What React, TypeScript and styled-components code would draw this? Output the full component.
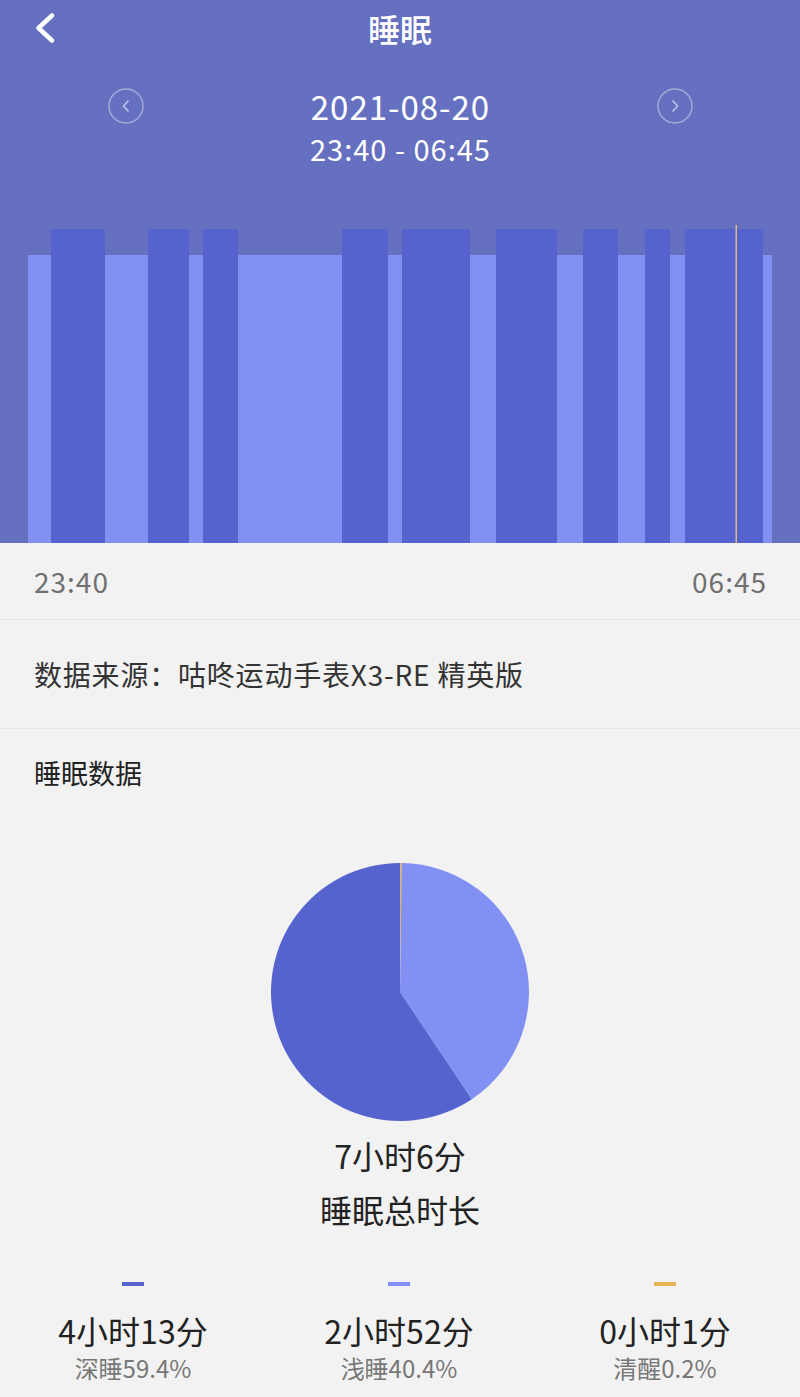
import * as React from "react";
import styled, { createGlobalStyle } from "styled-components";

const GlobalStyle = createGlobalStyle`
  html, body {
    margin: 0;
    padding: 0;
    background: #f2f2f2;
    font-family: "Noto Sans CJK SC", "Noto Sans", sans-serif;
  }
`;

const DEEP = "#5663cf";
const LIGHT = "#8290f4";
const AWAKE = "#e6b553";

const Page = styled.div`
  width: 800px;
  height: 1397px;
  overflow: hidden;
  background: #f2f2f2;
`;

const Header = styled.header`
  background: #6670c0;
  display: flex;
  flex-direction: column;
  color: #fff;
`;

const TopBar = styled.div`
  position: relative;
  height: 56px;
  display: flex;
  align-items: center;
  justify-content: center;
`;

const BackButton = styled.div`
  position: absolute;
  left: 32px;
  top: 12px;
  width: 26px;
  height: 32px;
`;

const Title = styled.h1`
  margin: 0;
  font-size: 32px;
  font-weight: 500;
  line-height: 56px;
`;

const DateRow = styled.div`
  margin-top: 29px;
  display: flex;
  align-items: flex-start;
  justify-content: space-between;
  padding: 0 107px 0 108px;
`;

const NavCircle = styled.div`
  width: 36px;
  height: 36px;
  margin-top: 3px;
`;

const DateText = styled.div`
  display: flex;
  flex-direction: column;
  align-items: center;
`;

const DateLine = styled.div<{ $size: number }>`
  font-size: ${(p) => p.$size}px;
  line-height: 42px;
  letter-spacing: 1px;
`;

const ChartWrap = styled.div`
  margin-top: 54px;
  height: 320px;
  display: flex;
`;

const TimeAxis = styled.div`
  height: 76px;
  display: flex;
  align-items: center;
  justify-content: space-between;
  padding: 0 33px 0 34px;
  font-size: 28px;
  letter-spacing: 1px;
  color: #707070;
  border-bottom: 1px solid #e6e6e6;
`;

const SourceRow = styled.div`
  height: 108px;
  display: flex;
  align-items: center;
  padding: 0 34px;
  font-size: 28px;
  letter-spacing: 0.8px;
  color: #333;
  border-bottom: 1px solid #e6e6e6;
`;

const SectionTitle = styled.div`
  padding: 24px 34px 0;
  font-size: 27px;
  line-height: 40px;
  color: #222;
`;

const PieBox = styled.div`
  margin-top: 70px;
  display: flex;
  justify-content: center;
`;

const Summary = styled.div`
  margin-top: 7px;
  display: flex;
  flex-direction: column;
  align-items: center;
  color: #222;
`;

const SummaryLine = styled.div`
  font-size: 32px;
  line-height: 54px;
`;

const Legend = styled.div`
  margin-top: 46px;
  display: grid;
  grid-template-columns: 266px 266px 266px;
`;

const LegendItem = styled.div`
  display: flex;
  flex-direction: column;
  align-items: center;
`;

const Dash = styled.div<{ $color: string }>`
  width: 22px;
  height: 4px;
  background: ${(p) => p.$color};
`;

const Value = styled.div`
  margin-top: 22px;
  font-size: 32px;
  line-height: 44px;
  color: #222;
`;

const Label = styled.div`
  font-size: 24px;
  line-height: 32px;
  color: #777;
`;

const deepBars: [number, number][] = [
  [51, 105],
  [148, 189],
  [203, 238],
  [342, 388],
  [402, 470],
  [496, 557],
  [583, 618],
  [645, 670],
  [685, 763],
];

const SleepChart = () => (
  <svg width="800" height="320" viewBox="0 0 800 320">
    <rect x="28" y="32" width="744" height="288" fill={LIGHT} />
    {deepBars.map(([a, b]) => (
      <rect key={a} x={a} y="6" width={b - a} height="314" fill={DEEP} />
    ))}
    <rect x="735.5" y="2" width="1.5" height="318" fill="#d9b98a" />
  </svg>
);

const polar = (cx: number, cy: number, r: number, frac: number) => {
  const a = frac * Math.PI * 2 - Math.PI / 2;
  return [cx + r * Math.cos(a), cy + r * Math.sin(a)];
};

const slice = (from: number, to: number, r: number) => {
  const [x1, y1] = polar(r, r, r, from);
  const [x2, y2] = polar(r, r, r, to);
  const large = to - from > 0.5 ? 1 : 0;
  return `M${r} ${r} L${x1} ${y1} A${r} ${r} 0 ${large} 1 ${x2} ${y2} Z`;
};

const PieChart = () => {
  const r = 129;
  return (
    <svg width={r * 2} height={r * 2} viewBox={`0 0 ${r * 2} ${r * 2}`}>
      <path d={slice(0, 0.002, r)} fill={AWAKE} />
      <path d={slice(0.002, 0.406, r)} fill={LIGHT} />
      <path d={slice(0.406, 1, r)} fill={DEEP} />
    </svg>
  );
};

const legend = [
  { color: DEEP, value: "4小时13分", label: "深睡59.4%" },
  { color: LIGHT, value: "2小时52分", label: "浅睡40.4%" },
  { color: AWAKE, value: "0小时1分", label: "清醒0.2%" },
];

export default function App() {
  return (
    <Page>
      <GlobalStyle />
      <Header>
        <TopBar>
          <BackButton>
            <svg width="26" height="32" viewBox="0 0 26 32">
              <path
                d="M20 3.5 L6.5 16 L20 28.5"
                fill="none"
                stroke="#fff"
                strokeWidth="4.5"
                strokeLinecap="round"
                strokeLinejoin="round"
              />
            </svg>
          </BackButton>
          <Title>睡眠</Title>
        </TopBar>
        <DateRow>
          <NavCircle>
            <svg width="36" height="36" viewBox="0 0 36 36">
              <circle cx="18" cy="18" r="17" fill="none" stroke="rgba(255,255,255,0.4)" strokeWidth="1.5" />
              <path d="M20.5 12.5 L15.5 18 L20.5 23.5" fill="none" stroke="rgba(255,255,255,0.6)" strokeWidth="1.5" />
            </svg>
          </NavCircle>
          <DateText>
            <DateLine $size={33}>2021-08-20</DateLine>
            <DateLine $size={29}>23:40 - 06:45</DateLine>
          </DateText>
          <NavCircle>
            <svg width="36" height="36" viewBox="0 0 36 36">
              <circle cx="18" cy="18" r="17" fill="none" stroke="rgba(255,255,255,0.4)" strokeWidth="1.5" />
              <path d="M15.5 12.5 L20.5 18 L15.5 23.5" fill="none" stroke="rgba(255,255,255,0.6)" strokeWidth="1.5" />
            </svg>
          </NavCircle>
        </DateRow>
        <ChartWrap>
          <SleepChart />
        </ChartWrap>
      </Header>
      <TimeAxis>
        <span>23:40</span>
        <span>06:45</span>
      </TimeAxis>
      <SourceRow>数据来源：咕咚运动手表X3-RE 精英版</SourceRow>
      <SectionTitle>睡眠数据</SectionTitle>
      <PieBox>
        <PieChart />
      </PieBox>
      <Summary>
        <SummaryLine>7小时6分</SummaryLine>
        <SummaryLine>睡眠总时长</SummaryLine>
      </Summary>
      <Legend>
        {legend.map((l) => (
          <LegendItem key={l.label}>
            <Dash $color={l.color} />
            <Value>{l.value}</Value>
            <Label>{l.label}</Label>
          </LegendItem>
        ))}
      </Legend>
    </Page>
  );
}
